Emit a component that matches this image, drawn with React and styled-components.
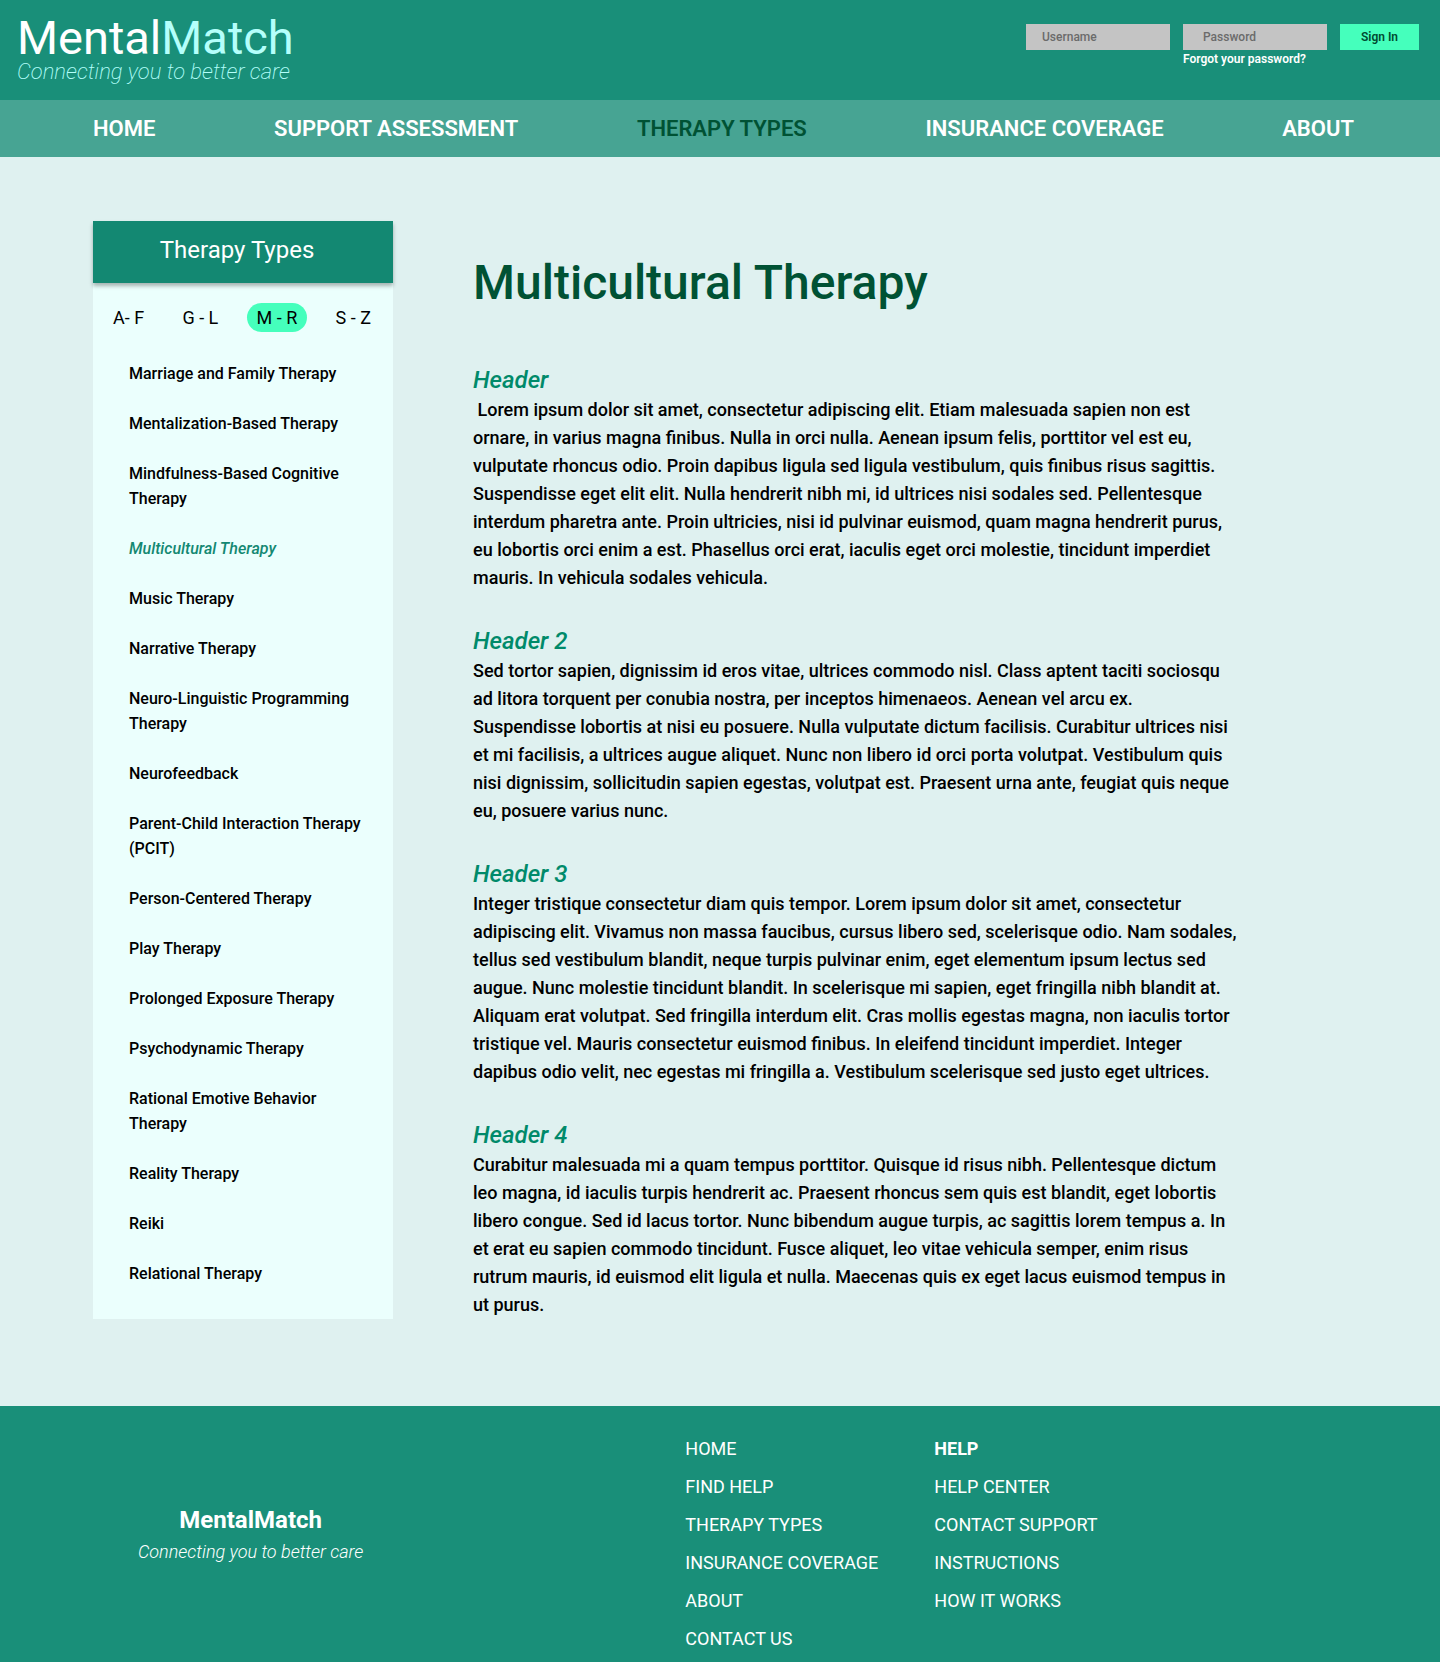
import React from "react";
import styled, { createGlobalStyle } from "styled-components";

const GlobalStyle = createGlobalStyle`
  *, *::before, *::after { box-sizing: border-box; }
  body {
    margin: 0;
    background: #dff1f0;
    color: #000;
    font-family: Roboto, "Liberation Sans", sans-serif;
    font-size: 18px;
    line-height: 28px;
  }
  h1, h2, p, ul { margin: 0; padding: 0; }
  ul { list-style: none; }
  a { color: inherit; text-decoration: none; }
  button, input { font-family: inherit; border: 0; margin: 0; border-radius: 0; }
  button { cursor: pointer; }
`;

const Header = styled.header`
  display: flex;
  justify-content: space-between;
  align-items: flex-start;
  min-height: 100px;
  padding: 14px 21px 12px 17px;
  background: #198f79;
  color: #fff;
`;

const Brand = styled.a`
  display: flex;
  flex-direction: column;
`;

const BrandName = styled.span`
  font-size: 47px;
  line-height: 48px;
`;

const BrandAccent = styled.span`
  color: #b4fffb;
`;

const Tagline = styled.span`
  font-size: ${({ $large }) => ($large ? "22px" : "18px")};
  line-height: ${({ $large }) => ($large ? "20px" : "28px")};
  font-style: italic;
  font-weight: ${({ $large }) => ($large ? 200 : 300)};
  color: ${({ $large }) => ($large ? "#b4fffb" : "#fff")};
  white-space: nowrap;
`;

const SignIn = styled.form`
  display: flex;
  align-items: flex-start;
  gap: 13px;
  padding-top: 10px;
`;

const Field = styled.div`
  display: flex;
  flex-direction: column;
  width: 144px;
`;

const TextInput = styled.input`
  width: 100%;
  height: 26px;
  padding: 0 ${({ $inset }) => $inset};
  background: #c4c4c4;
  color: #222;
  font-size: 12px;
  font-weight: 500;

  &::placeholder { color: #6b6b6b; opacity: 1; }
`;

const ForgotLink = styled.a`
  font-size: 12px;
  font-weight: 600;
  line-height: 18px;
  white-space: nowrap;
`;

const SignInButton = styled.button`
  width: 79px;
  height: 26px;
  padding: 0;
  background: #45ffbc;
  color: #004a30;
  font-size: 12px;
  font-weight: 600;
`;

const Nav = styled.nav`
  display: flex;
  justify-content: space-between;
  align-items: center;
  min-height: 57px;
  padding: 0 86px 0 93px;
  background: #47a493;
`;

const NavLink = styled.a`
  font-size: 22px;
  font-weight: 600;
  color: ${({ $active }) => ($active ? "#005234" : "#fff")};
`;

const Main = styled.main`
  display: flex;
  align-items: flex-start;
  gap: 80px;
  padding: 64px 93px 87px;
`;

const Sidebar = styled.aside`
  flex: 0 0 300px;
  background: #ebfffd;
  padding-bottom: 33px;
`;

const SidebarTitle = styled.h2`
  padding: 15px 12px 19px 0;
  background: #138872;
  box-shadow: 0 3px 4px rgba(0, 0, 0, 0.3);
  color: #fff;
  font-size: 24px;
  font-weight: 400;
  line-height: 28px;
  text-align: center;
`;

const RangeBar = styled.div`
  display: flex;
  justify-content: space-between;
  padding: 20px 12px 29px 10px;
`;

const RangeButton = styled.button`
  height: 29px;
  padding: 0 10px;
  border-radius: 15px;
  background: ${({ $active }) => ($active ? "#45ffbc" : "transparent")};
  color: #000;
  font-size: 18px;
`;

const TherapyList = styled.ul`
  display: flex;
  flex-direction: column;
  gap: 25px;
  padding: 0 24px 0 36px;
  font-size: 16px;
  font-weight: 500;
  line-height: 25px;
`;

const TherapyLink = styled.a`
  color: ${({ $active }) => ($active ? "#138872" : "inherit")};
  font-style: ${({ $active }) => ($active ? "italic" : "normal")};
`;

const Article = styled.article`
  flex: 1 1 0;
  max-width: 765px;
  padding-top: 32px;
`;

const Title = styled.h1`
  margin-bottom: 52px;
  color: #005234;
  font-size: 48px;
  font-weight: 500;
  line-height: 60px;
`;

const Section = styled.section`
  & + & { margin-top: 34px; }
`;

const SectionTitle = styled.h2`
  padding-bottom: 1px;
  color: #008a6a;
  font-size: 24px;
  font-style: italic;
  font-weight: 500;
  line-height: 30px;
`;

const Line = styled.span`
  display: block;
  white-space: pre;
`;

const Paragraph = styled.p`
  font-size: 18px;
  font-weight: 500;
  line-height: 28px;
`;

const Footer = styled.footer`
  display: flex;
  align-items: flex-start;
  min-height: 256px;
  padding: 24px 93px 4px 138px;
  background: #198f79;
  color: #fff;
`;

const FooterBrand = styled.div`
  display: flex;
  flex-direction: column;
  align-items: center;
  align-self: center;
  flex: 0 0 225px;
  margin-right: 322px;
  padding-bottom: 20px;
`;

const FooterName = styled.span`
  font-size: 24px;
  font-weight: 700;
  line-height: 36px;
`;

const FooterColumn = styled.ul`
  flex: 0 0 249px;
  line-height: 38px;
`;

const FooterLink = styled.a`
  display: block;
  font-weight: ${({ $strong }) => ($strong ? 700 : 400)};
`;

const navItems = ["HOME", "SUPPORT ASSESSMENT", "THERAPY TYPES", "INSURANCE COVERAGE", "ABOUT"];
const ranges = ["A- F", "G - L", "M - R", "S - Z"];
const therapies = [
  "Marriage and Family Therapy",
  "Mentalization-Based Therapy",
  "Mindfulness-Based Cognitive Therapy",
  "Multicultural Therapy",
  "Music Therapy",
  "Narrative Therapy",
  "Neuro-Linguistic Programming Therapy",
  "Neurofeedback",
  "Parent-Child Interaction Therapy (PCIT)",
  "Person-Centered Therapy",
  "Play Therapy",
  "Prolonged Exposure Therapy",
  "Psychodynamic Therapy",
  "Rational Emotive Behavior Therapy",
  "Reality Therapy",
  "Reiki",
  "Relational Therapy",
];

const sections = [
  {
    title: "Header",
    lines: [
      " Lorem ipsum dolor sit amet, consectetur adipiscing elit. Etiam malesuada sapien non est",
      "ornare, in varius magna finibus. Nulla in orci nulla. Aenean ipsum felis, porttitor vel est eu,",
      "vulputate rhoncus odio. Proin dapibus ligula sed ligula vestibulum, quis finibus risus sagittis.",
      "Suspendisse eget elit elit. Nulla hendrerit nibh mi, id ultrices nisi sodales sed. Pellentesque",
      "interdum pharetra ante. Proin ultricies, nisi id pulvinar euismod, quam magna hendrerit purus,",
      "eu lobortis orci enim a est. Phasellus orci erat, iaculis eget orci molestie, tincidunt imperdiet",
      "mauris. In vehicula sodales vehicula.",
    ],
  },
  {
    title: "Header 2",
    lines: [
      "Sed tortor sapien, dignissim id eros vitae, ultrices commodo nisl. Class aptent taciti sociosqu",
      "ad litora torquent per conubia nostra, per inceptos himenaeos. Aenean vel arcu ex.",
      "Suspendisse lobortis at nisi eu posuere. Nulla vulputate dictum facilisis. Curabitur ultrices nisi",
      "et mi facilisis, a ultrices augue aliquet. Nunc non libero id orci porta volutpat. Vestibulum quis",
      "nisi dignissim, sollicitudin sapien egestas, volutpat est. Praesent urna ante, feugiat quis neque",
      "eu, posuere varius nunc.",
    ],
  },
  {
    title: "Header 3",
    lines: [
      "Integer tristique consectetur diam quis tempor. Lorem ipsum dolor sit amet, consectetur",
      "adipiscing elit. Vivamus non massa faucibus, cursus libero sed, scelerisque odio. Nam sodales,",
      "tellus sed vestibulum blandit, neque turpis pulvinar enim, eget elementum ipsum lectus sed",
      "augue. Nunc molestie tincidunt blandit. In scelerisque mi sapien, eget fringilla nibh blandit at.",
      "Aliquam erat volutpat. Sed fringilla interdum elit. Cras mollis egestas magna, non iaculis tortor",
      "tristique vel. Mauris consectetur euismod finibus. In eleifend tincidunt imperdiet. Integer",
      "dapibus odio velit, nec egestas mi fringilla a. Vestibulum scelerisque sed justo eget ultrices.",
    ],
  },
  {
    title: "Header 4",
    lines: [
      "Curabitur malesuada mi a quam tempus porttitor. Quisque id risus nibh. Pellentesque dictum",
      "leo magna, id iaculis turpis hendrerit ac. Praesent rhoncus sem quis est blandit, eget lobortis",
      "libero congue. Sed id lacus tortor. Nunc bibendum augue turpis, ac sagittis lorem tempus a. In",
      "et erat eu sapien commodo tincidunt. Fusce aliquet, leo vitae vehicula semper, enim risus",
      "rutrum mauris, id euismod elit ligula et nulla. Maecenas quis ex eget lacus euismod tempus in",
      "ut purus.",
    ],
  },
];

const footerColumns = [
  ["HOME", "FIND HELP", "THERAPY TYPES", "INSURANCE COVERAGE", "ABOUT", "CONTACT US"],
  ["HELP", "HELP CENTER", "CONTACT SUPPORT", "INSTRUCTIONS", "HOW IT WORKS"],
];

export default function App() {
  return (
    <>
      <GlobalStyle />
      <Header>
        <Brand href="#">
          <BrandName>
            Mental<BrandAccent>Match</BrandAccent>
          </BrandName>
          <Tagline $large>Connecting you to better care</Tagline>
        </Brand>
        <SignIn onSubmit={(e) => e.preventDefault()}>
          <Field>
            <TextInput type="text" aria-label="Username" placeholder="Username" $inset="16px" />
          </Field>
          <Field>
            <TextInput type="password" aria-label="Password" placeholder="Password" $inset="20px" />
            <ForgotLink href="#">Forgot your password?</ForgotLink>
          </Field>
          <SignInButton type="submit">Sign In</SignInButton>
        </SignIn>
      </Header>
      <Nav>
        {navItems.map((item) => (
          <NavLink key={item} href="#" $active={item === "THERAPY TYPES"}>
            {item}
          </NavLink>
        ))}
      </Nav>
      <Main>
        <Sidebar>
          <SidebarTitle>Therapy Types</SidebarTitle>
          <RangeBar>
            {ranges.map((range) => (
              <RangeButton key={range} type="button" $active={range === "M - R"}>
                {range}
              </RangeButton>
            ))}
          </RangeBar>
          <TherapyList>
            {therapies.map((name) => (
              <li key={name}>
                <TherapyLink href="#" $active={name === "Multicultural Therapy"}>
                  {name}
                </TherapyLink>
              </li>
            ))}
          </TherapyList>
        </Sidebar>
        <Article>
          <Title>Multicultural Therapy</Title>
          {sections.map(({ title, lines }) => (
            <Section key={title}>
              <SectionTitle>{title}</SectionTitle>
              <Paragraph>
                {lines.map((line) => (
                  <Line key={line}>{line}</Line>
                ))}
              </Paragraph>
            </Section>
          ))}
        </Article>
      </Main>
      <Footer>
        <FooterBrand>
          <FooterName>MentalMatch</FooterName>
          <Tagline>Connecting you to better care</Tagline>
        </FooterBrand>
        {footerColumns.map((links) => (
          <FooterColumn key={links[0]}>
            {links.map((link) => (
              <li key={link}>
                <FooterLink href="#" $strong={link === "HELP"}>
                  {link}
                </FooterLink>
              </li>
            ))}
          </FooterColumn>
        ))}
      </Footer>
    </>
  );
}
